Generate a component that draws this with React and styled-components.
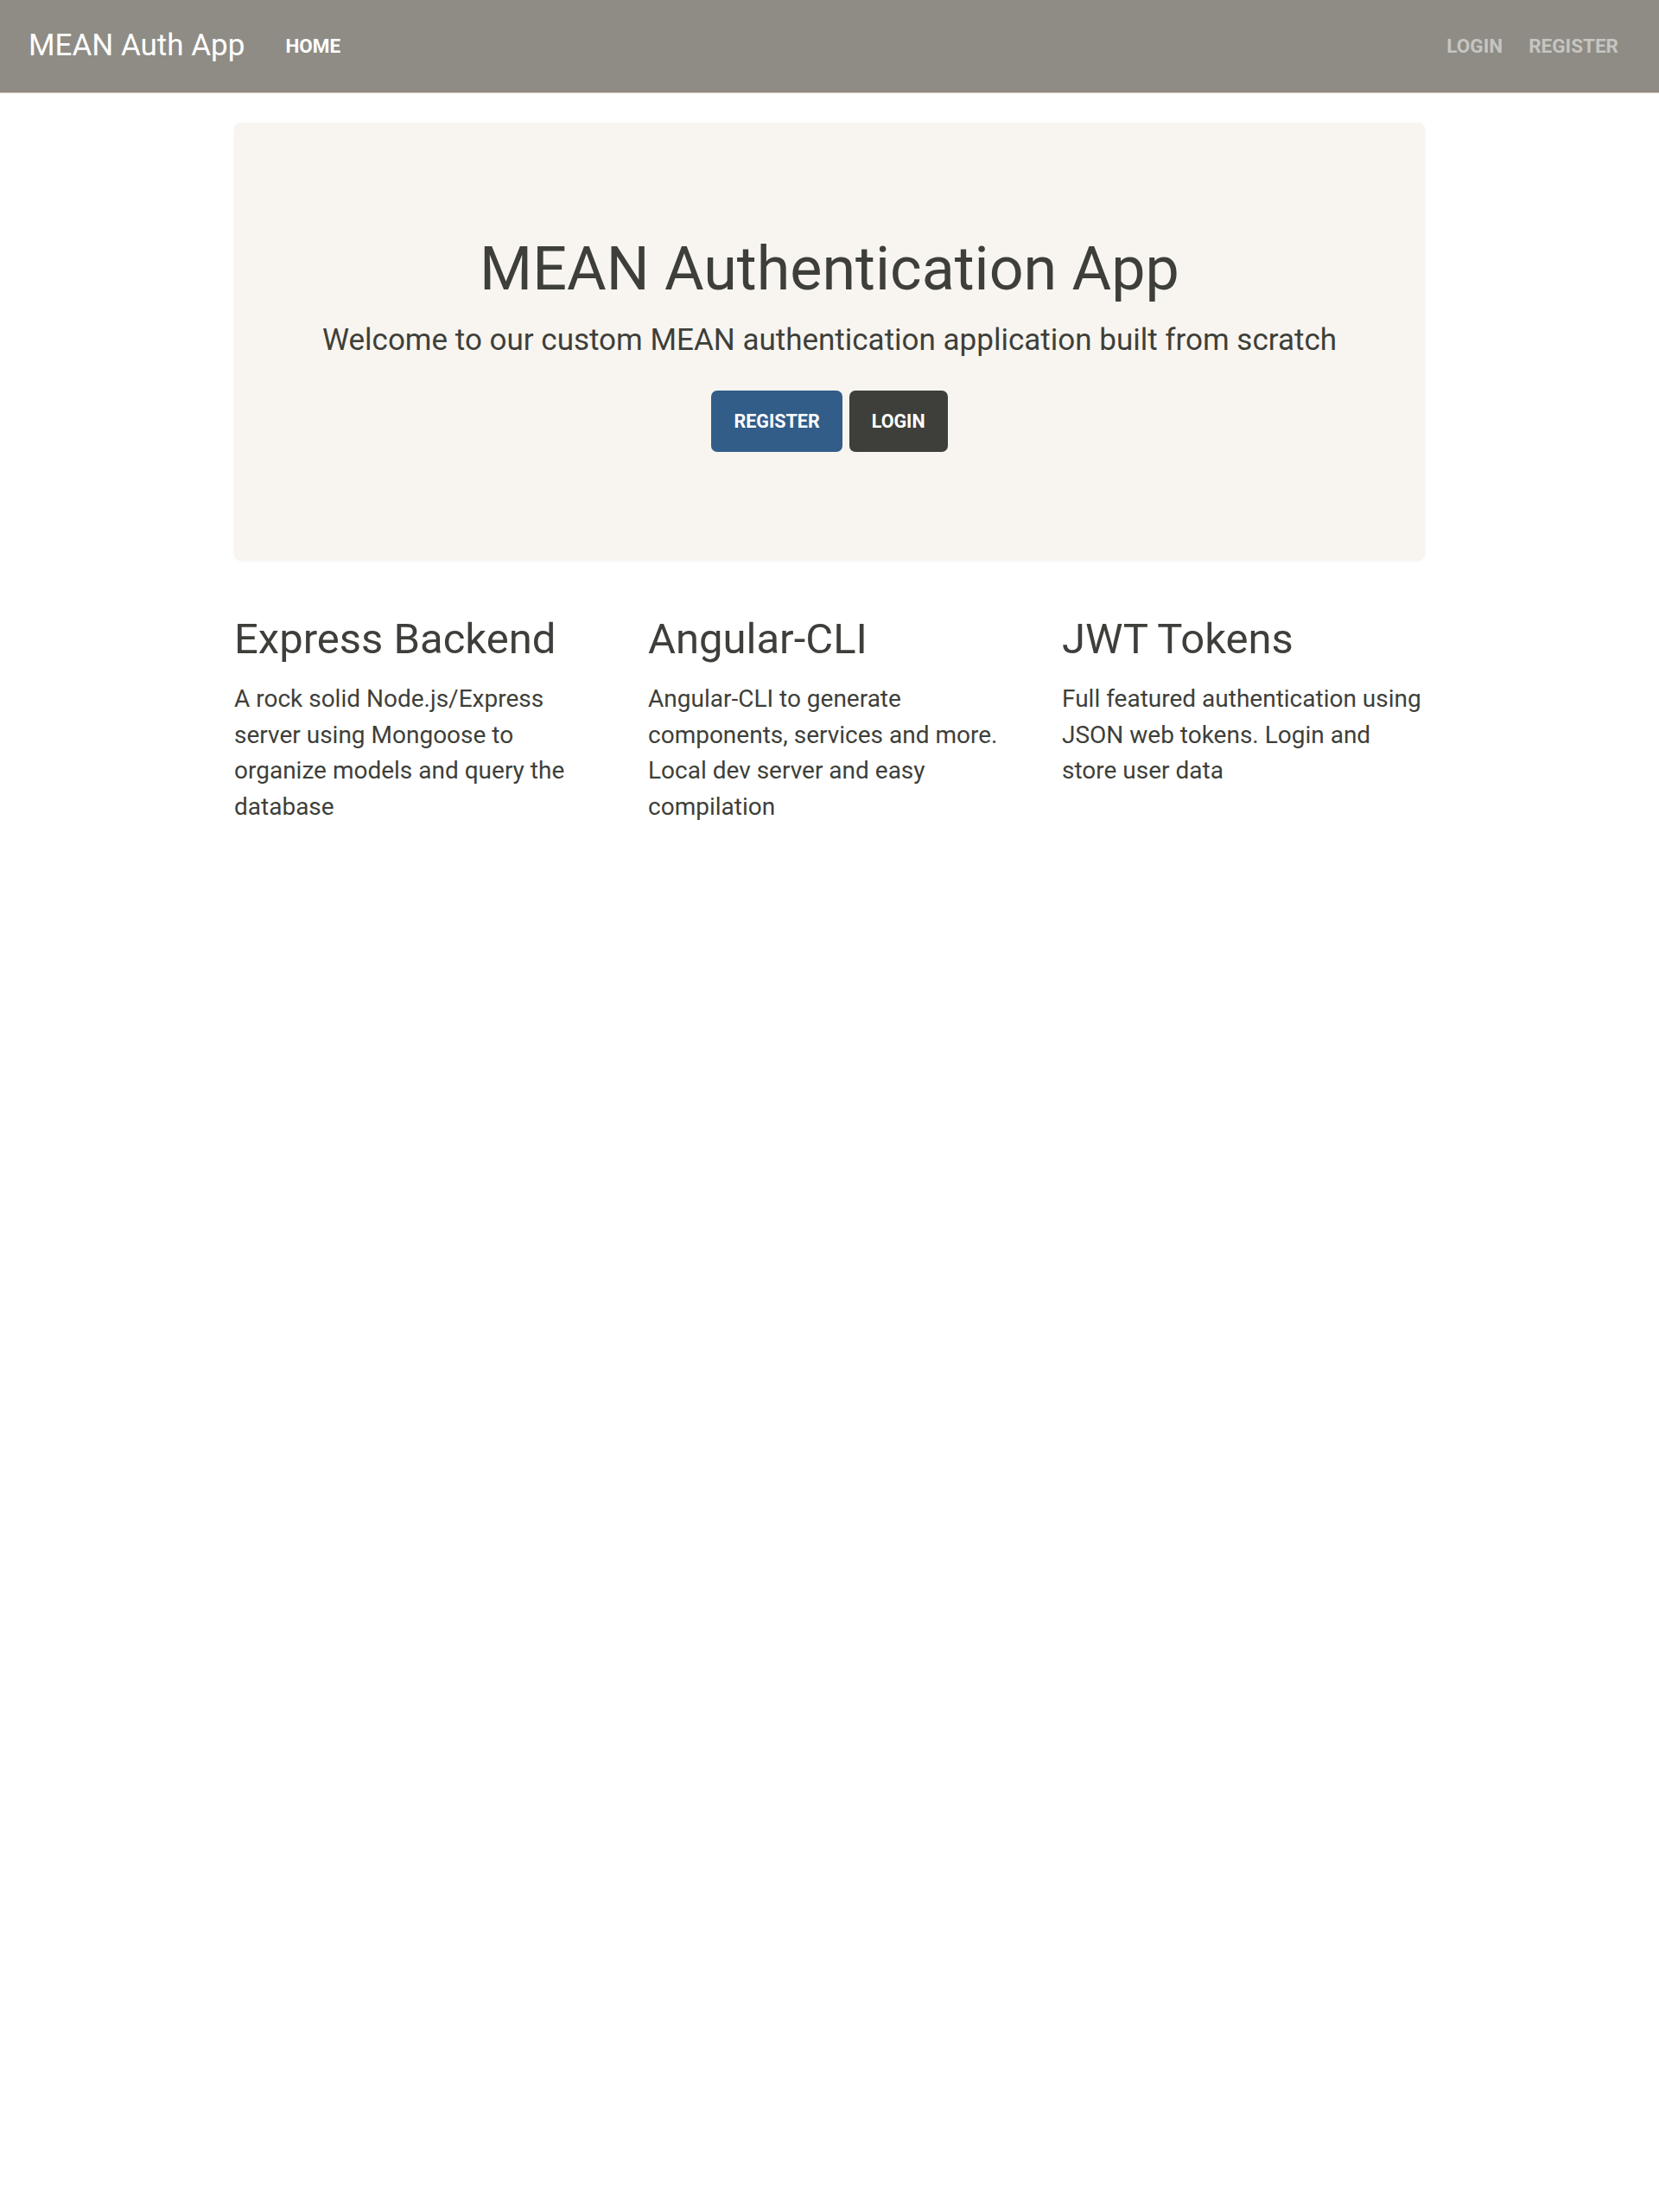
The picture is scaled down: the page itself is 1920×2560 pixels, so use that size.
import React from "react";
import styled, { createGlobalStyle } from "styled-components";

const GlobalStyle = createGlobalStyle`
  html, body {
    margin: 0;
    padding: 0;
    background: #fff;
    font-family: Roboto, "Liberation Sans", sans-serif;
    color: #3e3f3a;
  }
  * { box-sizing: border-box; }
`;

const Navbar = styled.nav`
  height: 108px;
  background-color: #8e8c84;
  border-bottom: 1px solid #dfd7ca;
  display: flex;
  align-items: center;
  padding: 0 32px 2px 33px;
`;

const Brand = styled.a`
  font-size: 35px;
  font-weight: 400;
  color: #fff;
  text-decoration: none;
  margin-right: 32px;
`;

const NavList = styled.ul`
  display: flex;
  list-style: none;
  margin: 0;
  padding: 0;
  margin-left: ${(p) => (p.right ? "auto" : "0")};
`;

const NavLink = styled.a`
  display: block;
  padding: 0 15px;
  font-size: 22.5px;
  font-weight: 700;
  text-transform: uppercase;
  text-decoration: none;
  color: ${(p) => (p.active ? "#fff" : "rgba(255, 255, 255, 0.5)")};
`;

const Container = styled.div`
  width: 1378px;
  margin: 0 auto;
  padding-top: 34px;
`;

const Jumbotron = styled.div`
  background-color: #f8f5f0;
  border-radius: 8px;
  box-shadow: 0 1px 3px rgba(0, 0, 0, 0.06);
  padding: 127px 40px 125px;
  text-align: center;
`;

const Title = styled.h1`
  margin: 0;
  font-size: 70px;
  font-weight: 400;
  line-height: 1.2;
`;

const Lead = styled.p`
  margin: 15px 0 31px;
  font-size: 35px;
  font-weight: 400;
  line-height: 1.5;
`;

const Button = styled.a`
  display: inline-block;
  padding: 0 26px;
  height: 71px;
  line-height: 71px;
  border-radius: 7px;
  font-size: 21.5px;
  font-weight: 700;
  text-transform: uppercase;
  color: #fff;
  text-decoration: none;
  vertical-align: top;
  background-color: ${(p) => (p.variant === "primary" ? "#325d88" : "#3e3f3a")};
  & + & {
    margin-left: 8px;
  }
`;

const Features = styled.div`
  display: grid;
  grid-template-columns: repeat(3, 1fr);
  column-gap: 59px;
  margin-top: 63px;
`;

const FeatureTitle = styled.h2`
  margin: 0 0 19px;
  font-size: 49px;
  font-weight: 400;
  line-height: 1.2;
`;

const FeatureText = styled.p`
  margin: 0;
  font-size: 28px;
  line-height: 41.5px;
`;

const features = [
  {
    title: "Express Backend",
    text: "A rock solid Node.js/Express server using Mongoose to organize models and query the database",
  },
  {
    title: "Angular-CLI",
    text: "Angular-CLI to generate components, services and more. Local dev server and easy compilation",
  },
  {
    title: "JWT Tokens",
    text: "Full featured authentication using JSON web tokens. Login and store user data",
  },
];

export default function App() {
  return (
    <>
      <GlobalStyle />
      <Navbar>
        <Brand href="#">MEAN Auth App</Brand>
        <NavList>
          <li>
            <NavLink href="#" active>
              Home
            </NavLink>
          </li>
        </NavList>
        <NavList right>
          <li>
            <NavLink href="#">Login</NavLink>
          </li>
          <li>
            <NavLink href="#">Register</NavLink>
          </li>
        </NavList>
      </Navbar>
      <Container>
        <Jumbotron>
          <Title>MEAN Authentication App</Title>
          <Lead>Welcome to our custom MEAN authentication application built from scratch</Lead>
          <div>
            <Button href="#" variant="primary">
              Register
            </Button>
            <Button href="#">Login</Button>
          </div>
        </Jumbotron>
        <Features>
          {features.map((f) => (
            <div key={f.title}>
              <FeatureTitle>{f.title}</FeatureTitle>
              <FeatureText>{f.text}</FeatureText>
            </div>
          ))}
        </Features>
      </Container>
    </>
  );
}
